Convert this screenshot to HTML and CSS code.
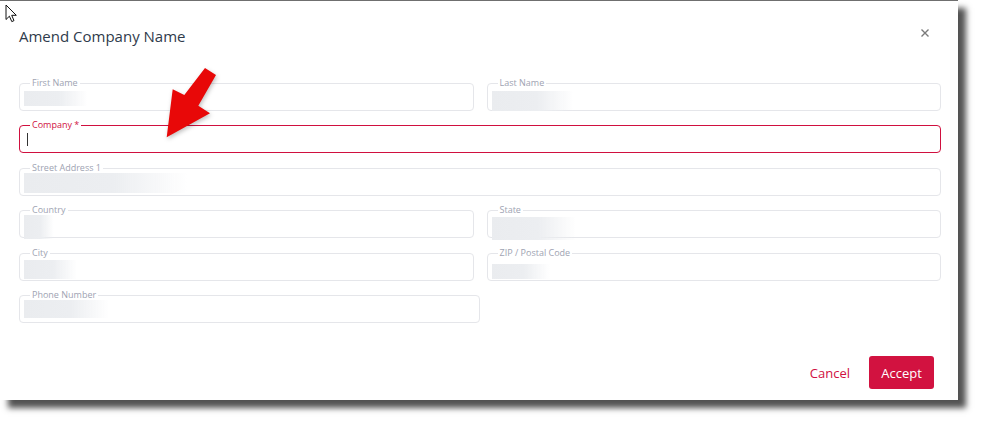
FILE: index.html
```html
<!DOCTYPE html>
<html lang="en">
<head>
<meta charset="utf-8">
<title>Amend Company Name</title>
<link rel="stylesheet" href="styles.css">
</head>
<body>
<div class="dialog">
  <div class="header">
    <h1 class="title">Amend Company Name</h1>
    <button class="close" aria-label="Close">
      <svg width="8" height="8" viewBox="0 0 8 8"><path d="M0.5 0.5 L7.5 7.5 M7.5 0.5 L0.5 7.5" stroke="#7a7a7a" stroke-width="1.4" fill="none"/></svg>
    </button>
  </div>
  <div class="form">
    <div class="field">
      <span class="label">First Name</span>
      <div class="value" style="width:64px;height:15px;margin-top:3px"></div>
    </div>
    <div class="field">
      <span class="label">Last Name</span>
      <div class="value" style="width:82px;height:20px;margin-top:3px"></div>
    </div>
    <div class="field wide active">
      <span class="label">Company *</span>
      <div class="caret"></div>
    </div>
    <div class="field wide">
      <span class="label">Street Address 1</span>
      <div class="value" style="width:163px;height:20px;margin-top:0px"></div>
    </div>
    <div class="field">
      <span class="label">Country</span>
      <div class="value" style="width:30px;height:24px;margin-top:0px"></div>
    </div>
    <div class="field">
      <span class="label">State</span>
      <div class="value" style="width:84px;height:23px;margin-top:2px"></div>
    </div>
    <div class="field">
      <span class="label">City</span>
      <div class="value" style="width:53px;height:19px;margin-top:2px"></div>
    </div>
    <div class="field">
      <span class="label">ZIP / Postal Code</span>
      <div class="value" style="width:58px;height:15px;margin-top:6px"></div>
    </div>
    <div class="field phone">
      <span class="label">Phone Number</span>
      <div class="value" style="width:85px;height:18px;margin-top:0px"></div>
    </div>
  </div>
  <div class="footer">
    <button class="btn-cancel">Cancel</button>
    <button class="btn-accept">Accept</button>
  </div>
</div>

<svg class="pointer" width="13" height="19" viewBox="0 0 13 19">
  <path d="M1 1 L1 15.5 L4.4 12.2 L6.8 17.6 L9 16.6 L6.7 11.3 L11.3 11.3 Z" fill="#fff" stroke="#111" stroke-width="1" stroke-linejoin="miter"/>
</svg>

<svg class="annotation" width="981" height="422" viewBox="0 0 981 422">
  <polygon points="205,68 216,75 198.3,105.7 210,113.3 166.7,137.3 172.7,89.3 184.3,95" fill="#e80808"/>
</svg>
</body>
</html>
```

FILE: styles.css
```css
html, body {
  margin: 0;
  padding: 0;
  background: #ffffff;
}

body {
  width: 981px;
  height: 422px;
  position: relative;
  overflow: hidden;
  font-family: "Open Sans", "Noto Sans", sans-serif;
}

.dialog {
  box-sizing: border-box;
  width: 958px;
  height: 400px;
  background: #ffffff;
  border-top: 1px solid #6f6f6f;
  padding: 0 17px 0 19px;
  box-shadow: 8px 8px 6px rgba(0, 0, 0, 0.68);
}

.header {
  display: flex;
  justify-content: space-between;
  align-items: center;
}

.title {
  margin: 0;
  padding-top: 24px;
  font-size: 15px;
  line-height: 22px;
  font-weight: 400;
  color: #2f3b4b;
}

.close {
  border: 0;
  background: none;
  padding: 0;
  margin: 18px 12px 0 0;
  width: 8px;
  height: 8px;
  display: flex;
}

.form {
  margin-top: 35.5px;
  display: grid;
  grid-template-columns: 1fr 1fr;
  column-gap: 13px;
  row-gap: 14.5px;
}

.field {
  position: relative;
  box-sizing: border-box;
  height: 28px;
  border: 1px solid #e5e6ea;
  border-radius: 4px;
  padding: 4px 4px;
}

.field.wide {
  grid-column: 1 / span 2;
}

.field.phone {
  grid-column: 1 / span 2;
  width: 461px;
}

.field.active {
  border-color: #d0103f;
}

.label {
  position: absolute;
  top: -7px;
  left: 10px;
  padding: 0 2px;
  background: #ffffff;
  font-size: 9px;
  line-height: 12px;
  color: #9ea3b2;
  white-space: nowrap;
}

.field.active .label {
  color: #d0103f;
}

.value {
  background: linear-gradient(to right, #eaecef 0%, #eceef1 55%, rgba(255, 255, 255, 0) 100%);
  filter: blur(0.6px);
}

.caret {
  width: 1px;
  height: 13px;
  margin: 3px 0 0 3px;
  background: #333333;
}

.footer {
  display: flex;
  justify-content: flex-end;
  align-items: center;
  margin-top: 33px;
  padding-right: 7px;
}

.btn-cancel {
  border: 0;
  background: none;
  padding: 0 10px;
  margin-right: 9px;
  font-family: inherit;
  font-size: 13px;
  color: #d0103f;
}

.btn-accept {
  border: 0;
  background: #d21240;
  color: #ffffff;
  border-radius: 3px;
  width: 65px;
  height: 33px;
  padding: 0;
  font-family: inherit;
  font-size: 13px;
}

.pointer {
  position: absolute;
  left: 5px;
  top: 4px;
}

.annotation {
  position: absolute;
  left: 0;
  top: 0;
  pointer-events: none;
  filter: drop-shadow(1px 2px 2px rgba(0, 0, 0, 0.25));
}
```
